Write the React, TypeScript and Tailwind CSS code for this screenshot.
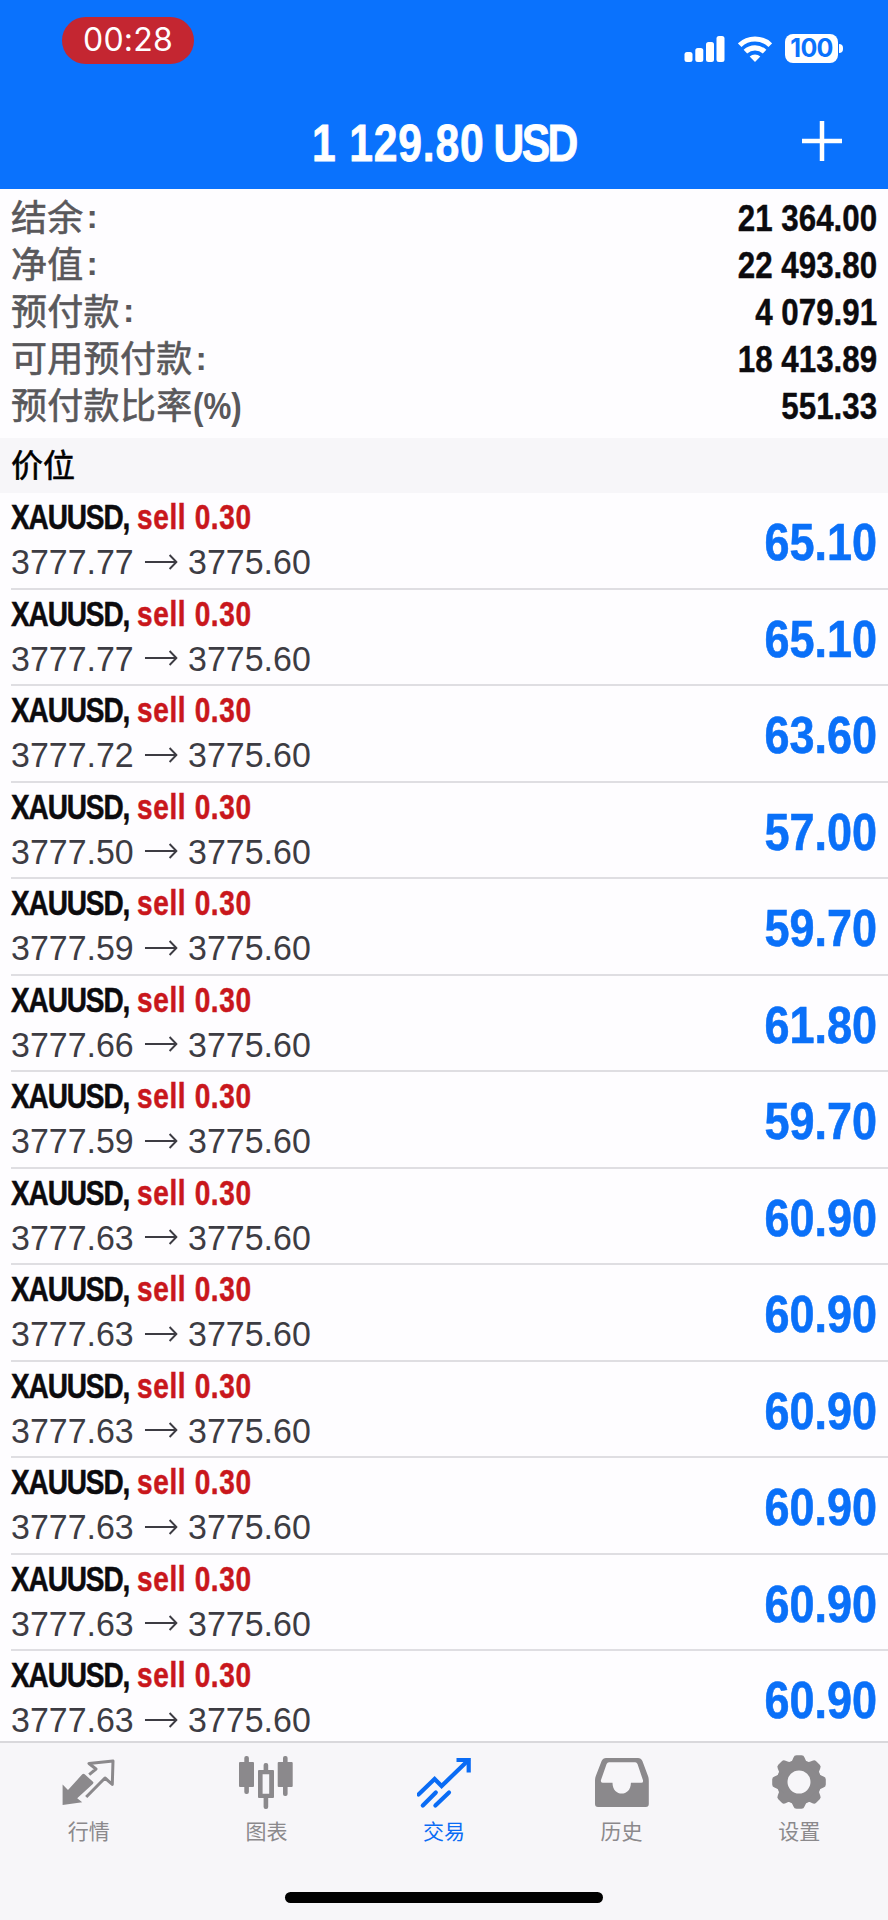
import React from 'react';

const summary = [
  { label: '结余', suffix: ':', value: '21 364.00' },
  { label: '净值', suffix: ':', value: '22 493.80' },
  { label: '预付款', suffix: ':', value: '4 079.91' },
  { label: '可用预付款', suffix: ':', value: '18 413.89' },
  { label: '预付款比率', suffix: '(%)', value: '551.33' },
];

const positions = [
  { open: '3777.77', profit: '65.10' },
  { open: '3777.77', profit: '65.10' },
  { open: '3777.72', profit: '63.60' },
  { open: '3777.50', profit: '57.00' },
  { open: '3777.59', profit: '59.70' },
  { open: '3777.66', profit: '61.80' },
  { open: '3777.59', profit: '59.70' },
  { open: '3777.63', profit: '60.90' },
  { open: '3777.63', profit: '60.90' },
  { open: '3777.63', profit: '60.90' },
  { open: '3777.63', profit: '60.90' },
  { open: '3777.63', profit: '60.90' },
  { open: '3777.63', profit: '60.90' },
];

const QuotesIcon = () => (
  <svg width="54" height="54" viewBox="0 0 54 54" fill="none">
    <path d="M.6 29.5 6 35 20.300 19.300q1.200-1.200 2.400 0l8.300 7.500q1 1-.2 2.200L15.200 43.300l5 4L.6 50Z" fill="currentColor" />
    <path d="M27.2 19.6 34 14l-7-5.500 24-2.600-.7 23.500-7.300-6.400L24.200 42" stroke="currentColor" strokeWidth="3" strokeLinejoin="round" />
  </svg>
);

const ChartIcon = () => (
  <svg width="54" height="54" viewBox="0 0 54 54" fill="currentColor">
    <rect x="5.3" y="1" width="4.6" height="38" rx="2" />
    <rect x="0" y="7" width="15" height="25" rx="1" />
    <rect x="44" y="1" width="4.6" height="40" rx="2" />
    <rect x="38.7" y="7" width="15" height="25" rx="1" />
    <rect x="24.6" y="8" width="4.6" height="9" rx="2" />
    <rect x="24.6" y="41" width="4.6" height="13" rx="2" />
    <path fillRule="evenodd" d="M20 15h14a1 1 0 0 1 1 1v26a1 1 0 0 1-1 1H20a1 1 0 0 1-1-1V16a1 1 0 0 1 1-1Zm3.6 4.3v19.4h6.6V19.3Z" />
  </svg>
);

const TradeIcon = () => (
  <svg width="54" height="54" viewBox="0 0 54 54" fill="none" stroke="currentColor" strokeWidth="4.200">
    <path d="M1.500 39.500 17.600 24l7 7L51 5.600" strokeLinecap="round" />
    <path d="M39.500 5h12.200v12.500" />
    <path d="M5.800 50.500 18.800 37.500" strokeLinecap="round" />
    <path d="M18.400 50.500 32 37.500" strokeLinecap="round" />
  </svg>
);

const HistoryIcon = () => (
  <svg width="54" height="54" viewBox="0 0 54 54" fill="currentColor">
    <path
      fillRule="evenodd"
      d="M11 3h32q3 0 4.4 3L53 21q.8 2 .8 5v23q0 3-3 3H3q-3 0-3-3V26q0-3 .8-5L6.600 6Q8 3 11 3Zm3 4.300q-1.700 0-2.400 1.600L6 25q-.7 2.700 1.600 2.700H17.500c0 14.500 18.400 14.500 18.400 0h10.300q2.500 0 1.700-2.700L42.500 8.900q-.7-1.600-2.300-1.600Z"
    />
  </svg>
);

const teeth = [0, 45, 90, 135, 180, 225, 270, 315];

const SettingsIcon = () => (
  <svg width="54" height="54" viewBox="-27 -27 54 54" fill="currentColor">
    <circle r="16.900" fill="none" stroke="currentColor" strokeWidth="10.800" />
    {teeth.map((angle) => (
      <path key={angle} transform={`rotate(${angle})`} d="M-9-19Q-6.500-21-5.500-24.500-4.800-26.800-2.500-26.800H2.500Q4.800-26.800 5.500-24.500 6.500-21 9-19Z" />
    ))}
  </svg>
);

const tabs = [
  { label: '行情', icon: <QuotesIcon /> },
  { label: '图表', icon: <ChartIcon /> },
  { label: '交易', icon: <TradeIcon />, active: true },
  { label: '历史', icon: <HistoryIcon /> },
  { label: '设置', icon: <SettingsIcon /> },
];

const Header = () => (
  <header className="h-[189px] shrink-0 bg-[#0a72fd] text-white">
    <div className="flex h-[97px] items-start justify-between pl-[62px] pr-[45px]">
      <div className="mt-[17px] flex h-[47px] w-[132px] items-center justify-center rounded-full bg-[#c42631] pb-px font-['Inter',sans-serif] text-[32px] tracking-[0.2px]">
        00:28
      </div>
      <div className="mt-[34px] flex h-[29px] items-center">
        <svg width="42" height="26" viewBox="0 0 42 26" fill="currentColor">
          <rect x="0.500" y="16" width="8" height="10" rx="2.500" />
          <rect x="11.300" y="12" width="8" height="14" rx="2.500" />
          <rect x="22" y="6" width="8" height="20" rx="2.500" />
          <rect x="32.500" y="0" width="8" height="26" rx="2.500" />
        </svg>
        <svg className="ml-3" width="34" height="26" viewBox="0 0 34 26" fill="none" stroke="currentColor" strokeWidth="5.200">
          <path d="M1.700 9.200a22 22 0 0 1 30.600 0" />
          <path d="M7.400 15.700a14 14 0 0 1 19.200 0" />
          <path d="M17 26l-5.300-5.400a7.600 7.600 0 0 1 10.600 0Z" fill="currentColor" stroke="none" />
        </svg>
        <div className="ml-[13px] flex h-[29px] w-[53px] items-center justify-center rounded-[8px] bg-white font-['Inter',sans-serif] text-[25px] font-bold leading-none tracking-[-0.7px] text-[#0a72fd]">
          100
        </div>
        <div className="ml-[1px] h-[9px] w-[4px] rounded-r-full bg-white" />
      </div>
    </div>
    <div className="grid h-[88px] grid-cols-[1fr_auto_1fr] items-center">
      <div />
      <h1 className="scale-x-[0.82] pt-[3px] text-[52px] font-bold leading-none tracking-[1px] [-webkit-text-stroke:0.800px_currentColor]">
        1 129.80<span className="ml-[11px] tracking-[-3.200px]">USD</span>
      </h1>
      <svg className="mr-[46px] justify-self-end" width="40" height="40" viewBox="0 0 40 40" stroke="currentColor" strokeWidth="4.500">
        <path d="M20 0v40M0 20h40" />
      </svg>
    </div>
  </header>
);

const App = () => {
  return (
    <div className="flex h-[1920px] w-[888px] flex-col overflow-hidden bg-[#fefdff] font-['Liberation_Sans','Noto_Sans_CJK_SC',sans-serif]">
      <Header />

      {/* Account summary */}
      <section className="h-[249px] shrink-0 px-[11px] pt-[6px]">
        {summary.map((row) => (
          <div key={row.label} className="flex h-[47.200px] items-center justify-between text-[36px] leading-none">
            <span className="flex items-center text-[#59585b]">
              <span className="tracking-[0.300px] [-webkit-text-stroke:0.600px_currentColor]">{row.label}</span>
              {row.suffix === ':' ? (
                <span className="ml-[3px] pb-[5px] text-[34px] font-bold">:</span>
              ) : (
                <span className="origin-left scale-x-[0.870] text-[36px] font-bold">{row.suffix}</span>
              )}
            </span>
            <span className="origin-right scale-x-[0.870] font-bold text-[#0c0b0e] [-webkit-text-stroke:0.400px_currentColor]">{row.value}</span>
          </div>
        ))}
      </section>

      <div className="flex h-[55px] shrink-0 items-center bg-[#f7f6f9] px-[11px] text-[32px] leading-none text-black [-webkit-text-stroke:0.600px_currentColor]">价位</div>

      {/* Open positions */}
      <ul className="min-h-0 flex-1 overflow-hidden pl-[11px]">
        {positions.map((p, i) => (
          <li key={i} className="flex h-[96.500px] items-center justify-between border-b-2 border-[#dfdee2] pr-[11px]">
            <div className="pb-[2px]">
              <p className="origin-left scale-x-[0.800] text-[35px] font-bold leading-[45px] text-[#0c0b0e] [-webkit-text-stroke:0.500px_currentColor]">
                <span className="tracking-[-1.400px]">XAUUSD,</span> <span className="tracking-[0.800px] text-[#c9171c]">sell 0.30</span>
              </p>
              <p className="flex origin-left scale-x-[0.970] items-center text-[35px] leading-[45px] text-[#3d3c43]">
                {p.open}
                <svg className="mx-[11px]" width="34" height="16" viewBox="0 0 34 16" fill="none" stroke="currentColor" strokeWidth="2">
                  <path d="M0 8h33M25.500 1l7 7-7 7" />
                </svg>
                3775.60
              </p>
            </div>
            <span className="origin-right scale-x-[0.865] pt-[4px] text-[52px] font-bold leading-none text-[#0a70f8] [-webkit-text-stroke:0.600px_currentColor]">{p.profit}</span>
          </li>
        ))}
      </ul>

      {/* Bottom tabs */}
      <nav className="flex h-[179px] shrink-0 flex-col border-t-2 border-[#d9d8dc] bg-[#f7f6f9]">
        <div className="grid grid-cols-5 pt-[12px]">
          {tabs.map((tab) => (
            <div key={tab.label} className={`flex flex-col items-center ${tab.active ? 'text-[#0a6cf5]' : 'text-[#8b898c]'}`}>
              {tab.icon}
              <span className="mt-[9px] font-['Noto_Sans_CJK_SC',sans-serif] text-[21px] leading-[24px]">{tab.label}</span>
            </div>
          ))}
        </div>
        <div className="mx-auto mb-[17px] mt-auto h-[11px] w-[318px] rounded-full bg-black" />
      </nav>
    </div>
  );
};

export default App;
